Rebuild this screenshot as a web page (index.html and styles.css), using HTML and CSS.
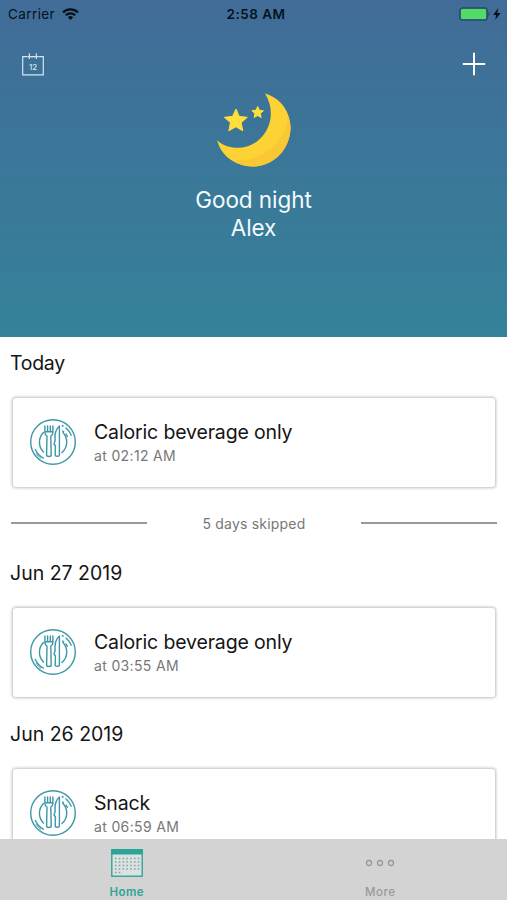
FILE: index.html
```html
<!DOCTYPE html>
<html lang="en">
<head>
	<meta charset="UTF-8">
	<title>Home</title>
	<link rel="stylesheet" href="styles.css">
</head>
<body>
	<svg class="sprite" aria-hidden="true">
		<symbol id="plate" viewBox="0 0 48 48">
			<g fill="none" stroke="currentColor" stroke-width="1.4" stroke-linecap="round" stroke-linejoin="round">
				<circle cx="24" cy="24" r="22.3" />
				<path d="M14.4 14.500A14 14 0 0 0 14.400 34M34 14.500A14 14 0 0 1 33 34.500" />
				<path d="M15.900 8v6.500c0 2 .7 3 2.100 3.600L17.600 37c0 2 4.600 2 4.600 0l-.4-18.900c1.400-.6 2.100-1.600 2.100-3.600V8M18.600 8v5.500M21.300 8v5.500M16 13.700h7.800" />
				<path d="M30.400 8v29c0 1.700-4.200 1.700-4.200 0l.2-9-1.300-2 1-3.500c-.6-6.500.2-11 4.300-14.500z" />
				<path d="M33.300 7.600l.9.500M37 10c2.300 2 4 4.300 5.200 7.200M33.600 13l1 .8M37 16l1.400 2.300M6.300 31.500c1.700 3.700 4.400 6.600 8 8.600" />
				<path d="M7.200 35.500c1.200 1.900 2.700 3.400 4.500 4.700" stroke-width="1" />
			</g>
		</symbol>
	</svg>

	<header class="hero">
		<div class="status-bar">
			<div class="carrier">
				<span>Carrier</span>
				<svg width="17" height="12" viewBox="0 0 17 12">
					<g fill="none" stroke="#06111b" stroke-width="2.3">
						<path d="M1 4.400a10.700 10.700 0 0 1 15 0" />
						<path d="M3.800 7.300a6.700 6.700 0 0 1 9.400 0" />
					</g>
					<path d="M8.500 12L5.800 9.200a3.900 3.900 0 0 1 5.400 0z" fill="#06111b" />
				</svg>
			</div>
			<span class="time">2:58 AM</span>
			<div class="battery">
				<svg width="43" height="14" viewBox="0 0 43 14">
					<rect x=".8" y=".8" width="27.4" height="12.4" rx="2.8" fill="none" stroke="#29495f" stroke-width="1.2" />
					<rect x="2" y="2" width="25" height="10" rx="1.2" fill="#4fdc67" />
					<path d="M29.500 4.800c1.700.8 1.700 3.600 0 4.400z" fill="#29495f" />
					<path d="M39.400 1L34 7.900h3.200L36.200 13 41.600 6H38.200z" fill="#06111b" />
				</svg>
			</div>
		</div>

		<nav class="actions">
			<svg class="calendar" width="22" height="23" viewBox="0 0 22 23">
				<g fill="none" stroke="#d3e5ef" stroke-width="1.2">
					<path d="M5.500 3.700H.7v18.100h20.600V3.700h-4.800M9 3.700h4" />
					<path d="M7.400.2v5.800M14.300.2v5.800M5.500 3.700h11" />
				</g>
				<text x="11" y="17" text-anchor="middle">12</text>
			</svg>
			<svg width="24" height="24" viewBox="0 0 24 24">
				<path d="M12 .8v22.400M.8 12h22.400" stroke="#fff" stroke-width="2" />
			</svg>
		</nav>

		<div class="greeting">
			<svg width="76" height="76" viewBox="0 0 76 76">
				<path d="M49 1.500C66 6.500 75 21.500 74.500 37 73.500 58 57 74.500 37 74.500 19.500 74.500 5 64 1.200 48.300 8 55 17 56.500 26.500 55.500 48 52.500 64 26 49 1.500z" fill="#fdd235" />
				<path d="M72 24C69.500 49 50 69 16.500 68.500 23 72.500 30 74.500 37 74.500 57 74.500 73.500 58 74.500 37 74.600 32 73.700 28 72 24z" fill="#f9c834" />
				<g fill="#ffe03a" stroke="#ffe03a" stroke-width="1" stroke-linejoin="round">
					<path d="M20 17l3.200 7.400 8.100.9-6.200 5.400 1.700 8.100-6.900-4-7.100 4 1.700-8.100-6.100-5.400 8.100-.9z" />
					<path d="M41.700 14.500l1.600 3.700 4.100.5-3.100 2.800.9 4-3.500-2-3.600 2 .9-4-3.100-2.800 4.100-.5z" />
				</g>
			</svg>
			<h1>Good night<br>Alex</h1>
		</div>
	</header>

	<main class="log">
		<h2 class="today">Today</h2>
		<article class="card">
			<svg class="plate"><use href="#plate" /></svg>
			<div>
				<h3>Caloric beverage only</h3>
				<p>at 02:12 AM</p>
			</div>
		</article>

		<div class="skipped">5 days skipped</div>

		<h2>Jun 27 2019</h2>
		<article class="card">
			<svg class="plate"><use href="#plate" /></svg>
			<div>
				<h3>Caloric beverage only</h3>
				<p>at 03:55 AM</p>
			</div>
		</article>

		<h2>Jun 26 2019</h2>
		<article class="card">
			<svg class="plate"><use href="#plate" /></svg>
			<div>
				<h3>Snack</h3>
				<p>at 06:59 AM</p>
			</div>
		</article>
	</main>

	<footer class="tabs">
		<a class="tab active">
			<svg width="32" height="28" viewBox="0 0 32 28">
				<rect x=".8" y=".8" width="30.4" height="26.4" fill="#d9e3e1" stroke="#2fa597" stroke-width="1.4" />
				<path d="M0 0h32v5.500H0z" fill="#2aa597" />
				<g stroke="#899d9a" stroke-width="1.5" stroke-dasharray="1.5 2.3">
					<path d="M4 9.500h24.500M4 13h24.500M4 16.500h24.500M4 20h24.500M4 23.500h6" />
				</g>
			</svg>
			<span>Home</span>
		</a>
		<a class="tab">
			<svg width="32" height="28" viewBox="0 0 32 28">
				<g fill="none" stroke="#999" stroke-width="1.3">
					<circle cx="5" cy="14" r="2.5" />
					<circle cx="16" cy="14" r="2.5" />
					<circle cx="27" cy="14" r="2.5" />
				</g>
			</svg>
			<span>More</span>
		</a>
	</footer>
</body>
</html>
```

FILE: styles.css
```css
* {
	box-sizing: border-box;
}

body {
	display: flex;
	flex-direction: column;
	height: 900px;
	margin: 0;
	overflow: hidden;
	background: #fff;
	color: #151515;
	font-family: Inter, "Liberation Sans", sans-serif;
}

h1, h2, h3, p {
	margin: 0;
	font-weight: 400;
}

svg {
	display: block;
}

.sprite {
	position: absolute;
	width: 0;
	height: 0;
}

/**
 * Header
 */
.hero {
	flex: none;
	height: 337px;
	background: linear-gradient(#416c98, #3d7398 30%, #35829a);
}

.status-bar {
	display: grid;
	grid-template-columns: 1fr auto 1fr;
	align-items: center;
	height: 27px;
	padding: 0 5px 0 8px;
	color: #06111b;
	font-size: 13.5px;
}

.carrier {
	display: flex;
	align-items: center;
	gap: 7px;
	letter-spacing: .4px;
}

.time {
	padding-left: 2px;
	font-weight: 600;
	letter-spacing: .5px;
}

.battery {
	justify-self: end;
}

.actions {
	display: flex;
	justify-content: space-between;
	align-items: center;
	height: 24px;
	margin-top: 25px;
	padding: 0 21px 0 22px;
}

.calendar text {
	fill: #d3e5ef;
	font-size: 8px;
	font-weight: 500;
}

.greeting {
	display: flex;
	flex-direction: column;
	align-items: center;
	gap: 18px;
	margin-top: 16px;
}

.greeting h1 {
	color: #f3fbfd;
	font-size: 22.5px;
	line-height: 28px;
	letter-spacing: -.05px;
	text-align: center;
}

/**
 * Meal log
 */
.log {
	flex: 1;
	min-height: 0;
	overflow: hidden;
	padding: 0 12px;
}

.log h2 {
	margin-left: -2px;
	padding: 26px 0 24px;
	font-size: 19.5px;
	line-height: 22px;
}

.log .today {
	padding-top: 15px;
	letter-spacing: -.3px;
}

.card {
	display: flex;
	align-items: center;
	gap: 17px;
	height: 89px;
	margin-left: 1px;
	padding-left: 16px;
	border-radius: 3px;
	box-shadow: 0 0 3px 1px rgba(0,0,0,.26);
}

.plate {
	width: 48px;
	height: 48px;
	margin-bottom: 1px;
	color: #3c97a6;
}

.card h3 {
	font-size: 19.5px;
	line-height: 24px;
	letter-spacing: -.15px;
}

.card p {
	margin-top: 2px;
	color: #777;
	font-size: 14px;
	line-height: 20px;
	letter-spacing: .35px;
}

.skipped {
	display: flex;
	align-items: center;
	justify-content: space-between;
	height: 20px;
	margin: 26px -2px 3px -1px;
	color: #777;
	font-size: 14px;
	letter-spacing: .2px;
}

.skipped:before,
.skipped:after {
	content: '';
	width: 136px;
	height: 2px;
	background: #999;
}

/**
 * Tab bar
 */
.tabs {
	display: flex;
	flex: none;
	height: 61px;
	background: #d3d3d3;
}

.tab {
	display: flex;
	flex: 1;
	flex-direction: column;
	align-items: center;
	gap: 8px;
	padding-top: 10px;
	color: #999;
	font-size: 11.5px;
	font-weight: 500;
	line-height: 14px;
	letter-spacing: .5px;
}

.tab.active {
	color: #2aa597;
	font-weight: 600;
}
```
